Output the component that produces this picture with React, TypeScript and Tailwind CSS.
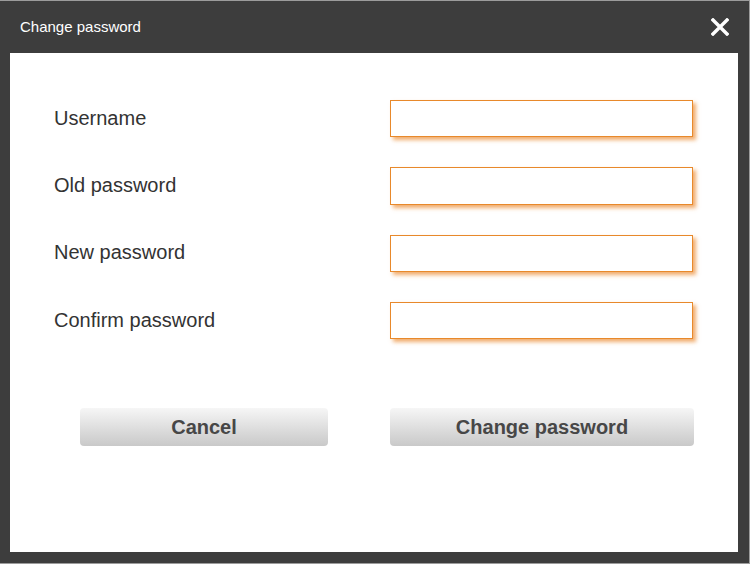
const fields = ["Username", "Old password", "New password", "Confirm password"];

function CloseIcon() {
  return (
    <svg width="18" height="18" viewBox="0 0 18 18" className="block">
      <path d="M2 2 L16 16 M16 2 L2 16" stroke="#ffffff" strokeWidth="3.4" strokeLinecap="square" />
    </svg>
  );
}

export default function App() {
  return (
    <div className="h-[564px] w-[750px] bg-[#9c9c9c] pt-[1px] font-['Liberation_Sans',Arial,sans-serif]">
      <div className="flex h-[562px] w-[749px] flex-col bg-[#3d3d3d]">
        <div className="flex h-[52px] items-center justify-between pl-[20px] pr-[19px]">
          <span className="text-[15px] text-white">Change password</span>
          <button className="flex h-[20px] w-[20px] items-center justify-center">
            <CloseIcon />
          </button>
        </div>
        <div className="ml-[10px] h-[499px] w-[728px] bg-white pl-[44px] pt-[47px]">
          <div className="flex flex-col gap-[30px]">
            {fields.map((f) => (
              <div key={f} className="flex h-[37.3px] items-center">
                <label className="w-[336px] -translate-y-[1px] text-[20px] text-[#333333]">{f}</label>
                <input
                  type={f === "Username" ? "text" : "password"}
                  className="h-full w-[303px] border border-[#e8892b] bg-white shadow-[3px_3px_4px_rgba(235,137,45,0.7)] outline-none"
                />
              </div>
            ))}
          </div>
          <div className="mt-[69px] flex">
            <div className="w-[336px] pl-[26px]">
              <button className="h-[38px] w-[248px] rounded-[4px] bg-gradient-to-b from-[#f6f6f6] to-[#c9c9c9] text-[20px] font-bold text-[#474747]">
                Cancel
              </button>
            </div>
            <button className="h-[38px] w-[304px] rounded-[4px] bg-gradient-to-b from-[#f6f6f6] to-[#c9c9c9] text-[20px] font-bold text-[#474747]">
              Change password
            </button>
          </div>
        </div>
      </div>
    </div>
  );
}
